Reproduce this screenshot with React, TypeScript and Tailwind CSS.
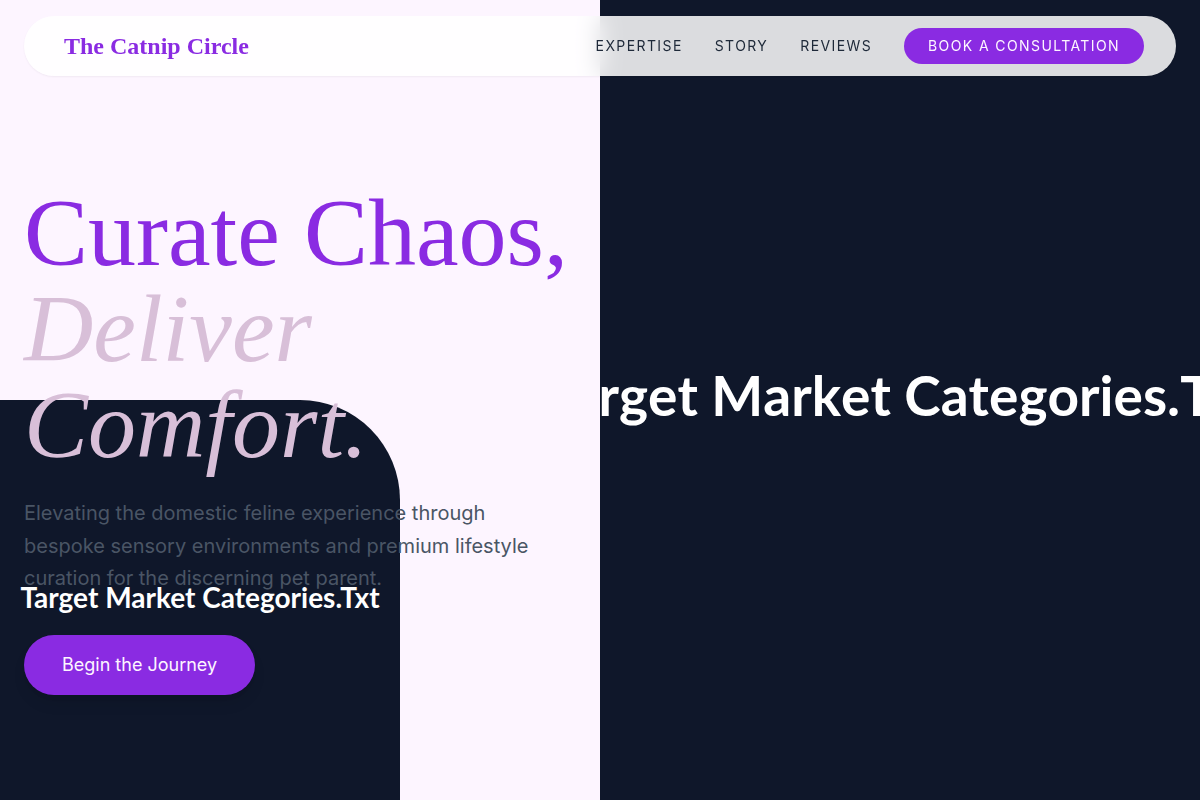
import clsx from 'clsx';

interface NavItem {
    label: string;
    href: string;
}

const navItems: NavItem[] = [
    { label: 'Expertise', href: '#expertise' },
    { label: 'Story', href: '#story' },
    { label: 'Reviews', href: '#reviews' },
];

function Header() {
    return (
        <header className="fixed inset-x-6 top-4 z-50 flex h-15 items-center justify-between rounded-full bg-white/85 pl-10 pr-8 shadow-xs backdrop-blur-md">
            <a href="#top" className="font-['Liberation_Serif',serif] text-2xl font-bold text-[#8a2be2]">
                The Catnip Circle
            </a>
            <nav className="flex items-center gap-8 text-sm uppercase tracking-widest text-gray-800">
                {navItems.map((item) => (
                    <a key={item.href} href={item.href} className="hover:text-[#8a2be2]">
                        {item.label}
                    </a>
                ))}
                <a
                    href="#book"
                    className="flex h-9 items-center rounded-full bg-[#8a2be2] px-6 text-[#fdf5ff]"
                >
                    Book a Consultation
                </a>
            </nav>
        </header>
    );
}

function Placeholder({ caption, large }: { caption: string; large?: boolean }) {
    return (
        <div
            className={clsx(
                "flex h-full items-center justify-center overflow-hidden whitespace-nowrap bg-[#0f172a] font-['Lato',sans-serif] font-bold text-white",
                large ? 'pb-2.5 text-[55px] [font-kerning:none]' : 'pb-1.5 text-[28px]'
            )}
        >
            <span>{caption}</span>
        </div>
    );
}

export default function App() {
    return (
        <div id="top" className="min-h-screen bg-[#fdf5ff] font-['Inter',sans-serif]">
            <Header />

            <main className="relative grid min-h-screen grid-cols-2">
                {/* Accent image tucked behind the hero copy */}
                <div className="absolute bottom-0 left-0 h-1/2 w-1/3 overflow-hidden rounded-tr-[100px]">
                    <Placeholder caption="Target Market Categories.Txt" />
                </div>

                <section className="relative flex flex-col items-start justify-center pl-6 pt-20">
                    <h1 className="mb-6 font-['Liberation_Serif',serif] text-8xl leading-none text-[#8a2be2]">
                        Curate Chaos, <span className="italic text-[#d8bfd8]">Deliver Comfort.</span>
                    </h1>
                    <p className="mb-10 max-w-lg text-xl leading-relaxed text-gray-600">
                        Elevating the domestic feline experience through bespoke sensory environments and premium
                        lifestyle curation for the discerning pet parent.
                    </p>
                    <button
                        type="button"
                        className="flex h-15 items-center rounded-full bg-[#8a2be2] px-[38px] text-lg text-[#fdf5ff] shadow-lg"
                    >
                        Begin the Journey
                    </button>
                </section>

                <section className="min-w-0">
                    <Placeholder caption="Target Market Categories.Txt" large />
                </section>
            </main>
        </div>
    );
}
